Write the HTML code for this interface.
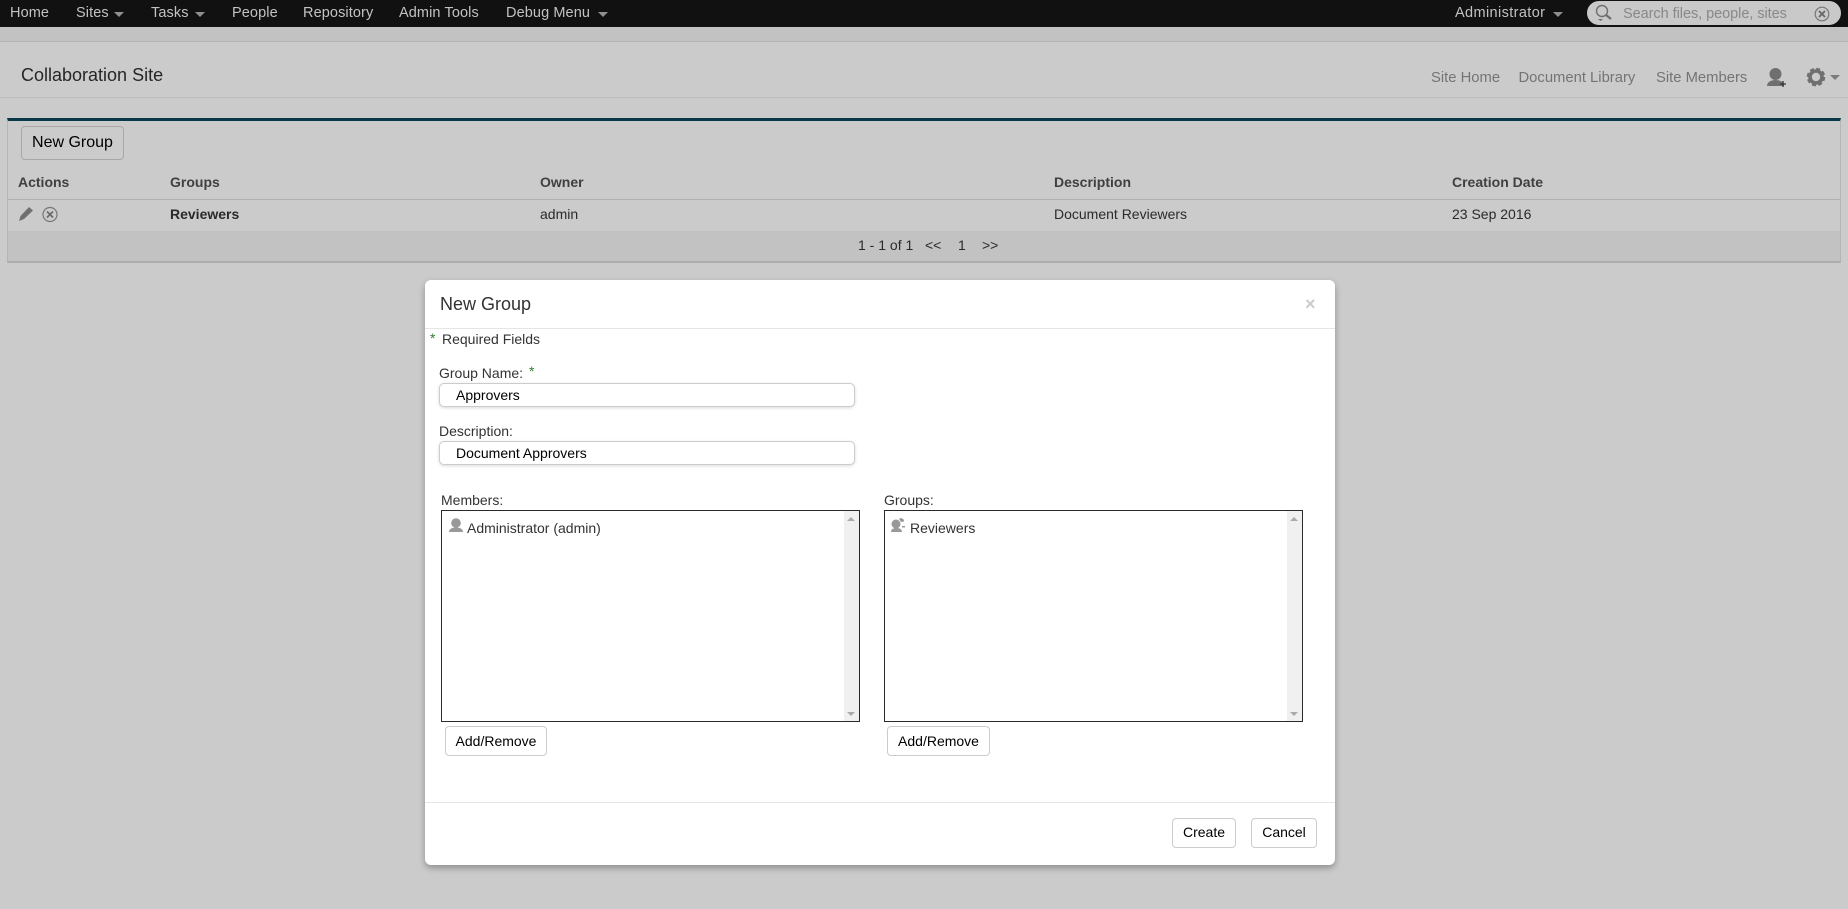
<!DOCTYPE html>
<html><head><meta charset="utf-8"><title>New Group</title>
<style>
html,body{margin:0;padding:0;width:1848px;height:909px;overflow:hidden;background:#cbcbcb;font-family:"Liberation Sans",sans-serif;font-size:14px;color:#2a2a2a}
.t{position:absolute;white-space:nowrap;line-height:20px}
.b{position:absolute;box-sizing:border-box}
.n{color:#c2c2c2;font-size:14.5px;letter-spacing:.1px}
.s{color:#747474;font-size:14.8px}
.h{font-weight:bold;color:#404040}
.c{position:absolute;width:0;height:0;border-left:5px solid transparent;border-right:5px solid transparent;border-top:5px solid #8f8f8f}
.btn{position:absolute;box-sizing:border-box;background:#fff;border:1px solid #ccc;border-radius:4px;color:#000;text-align:center;line-height:28px;height:30px}
.inp{position:absolute;box-sizing:border-box;left:439px;width:416px;height:24px;background:#fff;border:1px solid #ccc;border-radius:5px;box-shadow:0 1px 3px rgba(0,0,0,.15);color:#000;padding-left:16px;line-height:22px}
.list{position:absolute;box-sizing:border-box;top:510px;height:212px;background:#fff;border:1px solid #2a2a2a}
.sb{position:absolute;right:0;top:0;bottom:0;width:15px;background:#f0f0f0}
.up{position:absolute;left:3px;top:6px;width:0;height:0;border-left:4px solid transparent;border-right:4px solid transparent;border-bottom:4px solid #aaa}
.dn{position:absolute;left:3px;bottom:5px;width:0;height:0;border-left:4px solid transparent;border-right:4px solid transparent;border-top:4px solid #aaa}
svg{position:absolute;overflow:visible}
</style></head><body>
<div class="b" style="left:0;top:0;width:1848px;height:27px;background:#111"></div>
<div class="b" style="left:0;top:27px;width:1848px;height:15px;background:#c2c2c2;border-bottom:1px solid #b3b3b3"></div>
<span class="t n" style="left:10px;top:3px">Home</span>
<span class="t n" style="left:76px;top:3px">Sites</span><i class="c" style="left:114px;top:12px"></i>
<span class="t n" style="left:151px;top:3px">Tasks</span><i class="c" style="left:195px;top:12px"></i>
<span class="t n" style="left:232px;top:3px">People</span>
<span class="t n" style="left:303px;top:3px">Repository</span>
<span class="t n" style="left:399px;top:3px">Admin Tools</span>
<span class="t n" style="left:506px;top:3px">Debug Menu</span><i class="c" style="left:598px;top:12px"></i>
<span class="t n" style="left:1455px;top:3px;letter-spacing:.38px">Administrator</span><i class="c" style="left:1553px;top:12px"></i>
<div class="b" style="left:1587px;top:1px;width:254px;height:24px;background:#c9c9c9;border-radius:12px"></div>
<svg style="left:0;top:0" width="1848" height="27"><circle cx="1602" cy="11" r="5.5" fill="none" stroke="#6e6e6e" stroke-width="1.4"/><path d="M1606 15l5 4" stroke="#6e6e6e" stroke-width="2.2" fill="none"/><path d="M1598 19h5l-2.500 2z" fill="#6e6e6e"/><circle cx="1822" cy="14" r="6.800" fill="none" stroke="#777" stroke-width="1.2"/><path d="M1819 11l6 6M1825 11l-6 6" stroke="#666" stroke-width="1.800"/></svg>
<span class="t" style="left:1623px;top:4px;color:#888;font-size:14.500px;letter-spacing:-.05px">Search files, people, sites</span>

<span class="t" style="left:21px;top:65px;font-size:18px;color:#262626">Collaboration Site</span>
<span class="t s" style="left:1431px;top:68px">Site Home</span>
<span class="t s" style="left:1518.500px;top:68px">Document Library</span>
<span class="t s" style="left:1656px;top:68px">Site Members</span>
<svg style="left:0;top:0" width="1848" height="100"><circle cx="1775.500" cy="74" r="6" fill="#6f6f6f"/><path d="M1767 86c0-4 4-6 8.500-6s8.500 2 8.500 6z" fill="#6f6f6f"/><path d="M1780 84h6M1783 81v6" stroke="#333" stroke-width="1.300"/><circle cx="1816" cy="77" r="6" fill="none" stroke="#6f6f6f" stroke-width="3.600"/><circle cx="1816" cy="77" r="8.300" fill="none" stroke="#6f6f6f" stroke-width="2" stroke-dasharray="4 2.520"/><path d="M1830 75h10l-5 5z" fill="#7c7c7c"/></svg>
<div class="b" style="left:0;top:97px;width:1848px;height:1px;background:#bcbcbc"></div>

<div class="b" style="left:7px;top:118px;width:1834px;height:145px;border-left:1px solid #b5b5b5;border-right:1px solid #b5b5b5;border-top:3px solid #073949;border-bottom:2px solid #adadad"></div>
<div class="b" style="left:8px;top:231px;width:1832px;height:30px;background:#c2c2c2"></div>
<div class="b" style="left:8px;top:199px;width:1832px;height:1px;background:#b0b0b0"></div>
<div class="b" style="left:21px;top:126px;width:103px;height:34px;border:1px solid #a8a8a8;border-radius:4px;font-size:16px;color:#000;text-align:center;line-height:31px">New Group</div>
<span class="t h" style="left:18px;top:172px">Actions</span>
<span class="t h" style="left:170px;top:172px">Groups</span>
<span class="t h" style="left:540px;top:172px">Owner</span>
<span class="t h" style="left:1054px;top:172px">Description</span>
<span class="t h" style="left:1452px;top:172px">Creation Date</span>
<svg style="left:0;top:0" width="80" height="240"><path d="M19 221l1.500-5 8.500-9 4 3.500-9 8.500z" fill="#707070"/><circle cx="50" cy="214.500" r="7" fill="none" stroke="#777" stroke-width="1.200"/><path d="M47 211.500l6 6M53 211.500l-6 6" stroke="#6a6a6a" stroke-width="1.700"/></svg>
<span class="t" style="left:170px;top:204px;font-weight:bold">Reviewers</span>
<span class="t" style="left:540px;top:204px">admin</span>
<span class="t" style="left:1054px;top:204px">Document Reviewers</span>
<span class="t" style="left:1452px;top:204px">23 Sep 2016</span>
<span class="t" style="left:858px;top:235px">1 - 1 of 1</span>
<span class="t" style="left:925px;top:235px">&lt;&lt;</span>
<span class="t" style="left:958px;top:235px">1</span>
<span class="t" style="left:982px;top:235px">&gt;&gt;</span>

<div class="b" style="left:425px;top:280px;width:910px;height:585px;background:#fff;border-radius:6px;box-shadow:0 3px 7px rgba(0,0,0,.3)"></div>
<div class="b" style="left:425px;top:328px;width:910px;height:1px;background:#e5e5e5"></div>
<div class="b" style="left:425px;top:802px;width:910px;height:1px;background:#e5e5e5"></div>
<span class="t" style="left:440px;top:293.500px;font-size:18px;color:#333">New Group</span>
<span class="t" style="left:1305px;top:293.500px;font-size:18px;font-weight:bold;color:#ccc">×</span>
<span class="t" style="left:430px;top:328px;color:#2f7d2f">*</span>
<span class="t" style="left:442px;top:329px;color:#333">Required Fields</span>
<span class="t" style="left:439px;top:363px;color:#333">Group Name:</span>
<span class="t" style="left:529px;top:361px;color:#2f7d2f">*</span>
<div class="inp" style="top:383px">Approvers</div>
<span class="t" style="left:439px;top:421px;color:#333">Description:</span>
<div class="inp" style="top:441px">Document Approvers</div>
<span class="t" style="left:441px;top:490px;color:#333">Members:</span>
<span class="t" style="left:884px;top:490px;color:#333">Groups:</span>
<div class="list" style="left:441px;width:419px"><div class="sb"><i class="up"></i><i class="dn"></i></div></div>
<div class="list" style="left:884px;width:419px"><div class="sb"><i class="up"></i><i class="dn"></i></div></div>
<svg style="left:0;top:0" width="1000" height="540"><circle cx="456" cy="523" r="4.800" fill="#999"/><path d="M449 532c0-3 3-4.500 7-4.500s7 1.500 7 4.500z" fill="#999"/><circle cx="896" cy="524" r="4.500" fill="#999"/><path d="M891 532c0-3 2.500-4 5.500-4s5.500 1 5.500 4z" fill="#999"/><path d="M899 519a3 3 0 0 1 5 2.500l-3 .5zM902 526h3v1.500h-3z" fill="#999"/></svg>
<span class="t" style="left:467px;top:518px;color:#333">Administrator (admin)</span>
<span class="t" style="left:910px;top:518px;color:#333">Reviewers</span>
<div class="btn" style="left:445px;top:726px;width:102px">Add/Remove</div>
<div class="btn" style="left:887px;top:726px;width:103px">Add/Remove</div>
<div class="btn" style="left:1172px;top:818px;width:64px;line-height:26px">Create</div>
<div class="btn" style="left:1251px;top:818px;width:66px;line-height:26px">Cancel</div>
</body></html>
